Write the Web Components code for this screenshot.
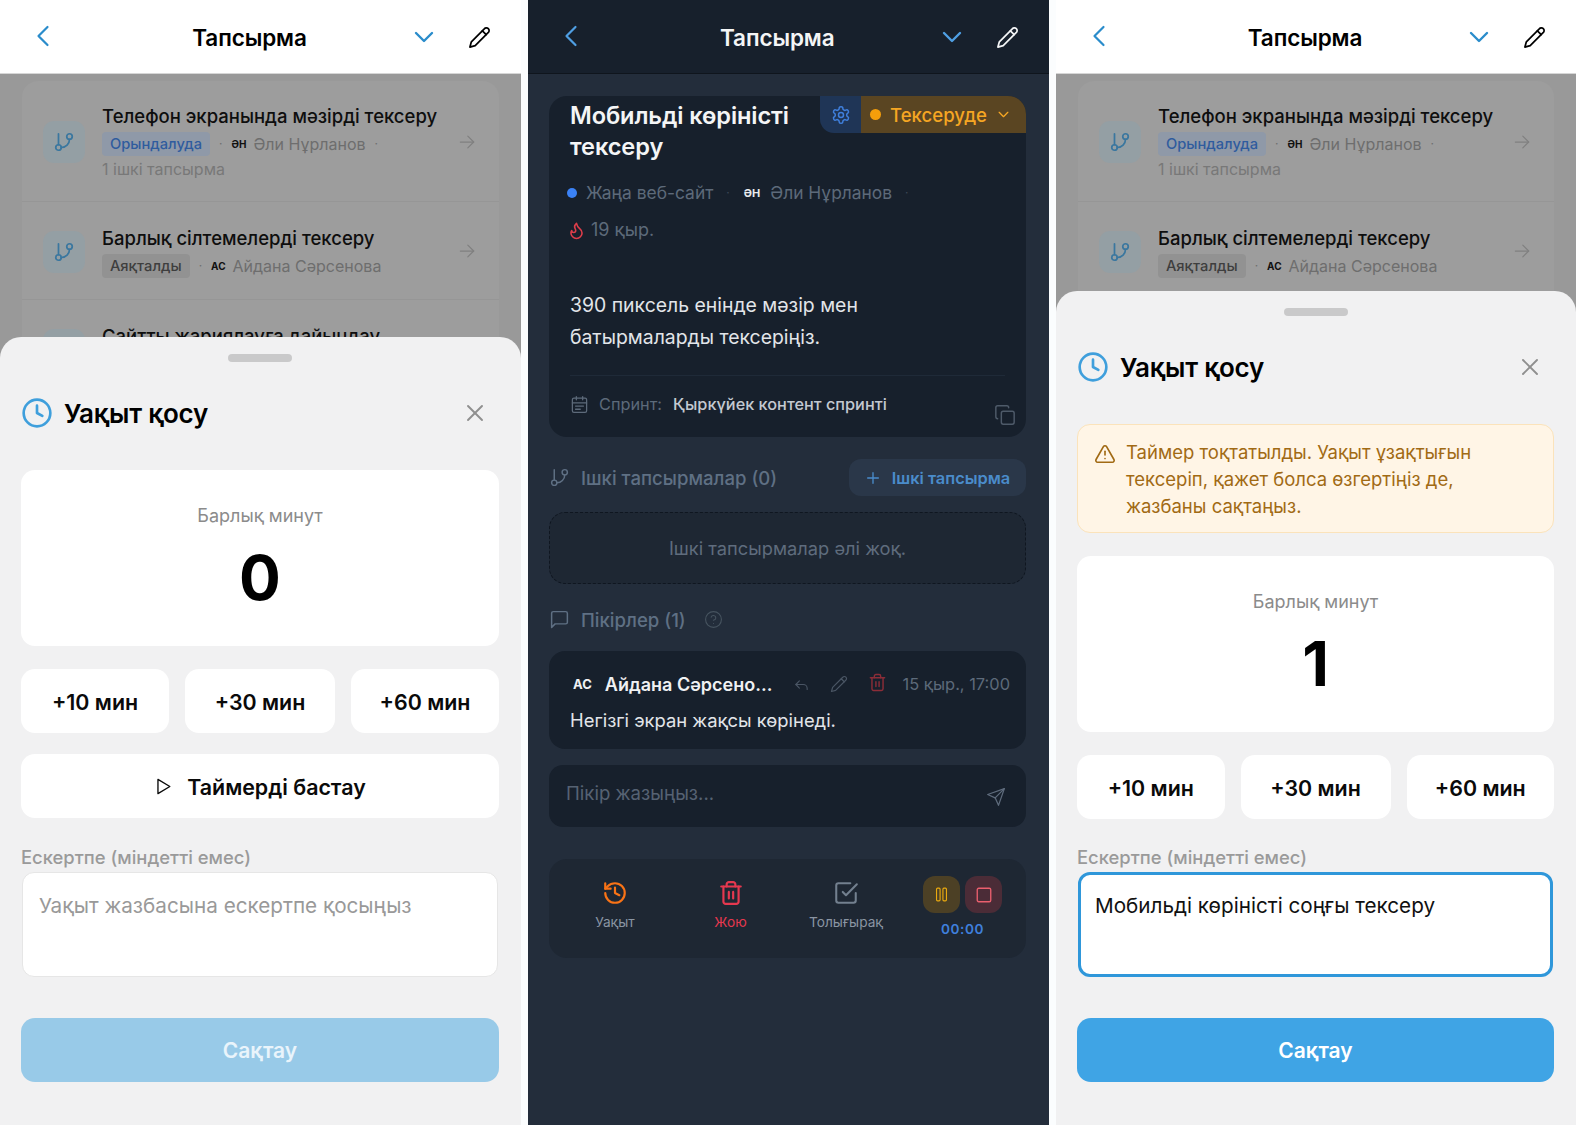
<!DOCTYPE html>
<html lang="kk">
<head>
<meta charset="utf-8">
<title>Тапсырма</title>
<style>
  html, body { margin: 0; height: 1125px; overflow: hidden; background: #fbfdfe; }
  body { font-family: Inter, "Noto Sans", sans-serif; }
  .screens { display: grid; grid-template-columns: 521px 520px 520px; column-gap: 7.5px; height: 1125px; }
  detail-screen { margin-left: -.5px; }
</style>
</head>
<body>
<div class="screens">
  <task-screen>
    <task-list with-third></task-list>
    <time-sheet total="0" with-timer note="" slot="sheet"></time-sheet>
  </task-screen>
  <detail-screen></detail-screen>
  <task-screen>
    <task-list></task-list>
    <time-sheet total="1" note="Мобильді көріністі соңғы тексеру" slot="sheet">
      <span slot="alert">Таймер тоқтатылды. Уақыт ұзақтығын тексеріп, қажет болса өзгертіңіз де, жазбаны сақтаңыз.</span>
    </time-sheet>
  </task-screen>
</div>

<script>
// lucide style paths, all on a 24 box
var ICONS = {
  back: '<path d="M15.5 3l-9 9 9 9"/>',
  down: '<path d="M4 8l8 8 8-8"/>',
  pencil: '<path d="M17 3a2.85 2.83 0 1 1 4 4L7.5 20.5 2 22l1.5-5.5Z"/><path d="M15 5l4 4"/>',
  branch: '<path d="M6 3v12"/><circle cx="18" cy="6" r="3"/><circle cx="6" cy="18" r="3"/><path d="M18 9a9 9 0 0 1-9 9"/>',
  arrow: '<path d="M4 12h16"/><path d="M13 5l7 7-7 7"/>',
  clock: '<circle cx="12" cy="12" r="10"/><path d="M12 6.5V12l4 2.2"/>',
  close: '<path d="M5 5l14 14"/><path d="M19 5L5 19"/>',
  gear: '<path d="M12.22 2h-.44a2 2 0 0 0-2 2v.18a2 2 0 0 1-1 1.73l-.43.25a2 2 0 0 1-2 0l-.15-.08a2 2 0 0 0-2.73.73l-.22.38a2 2 0 0 0 .73 2.73l.15.1a2 2 0 0 1 1 1.72v.51a2 2 0 0 1-1 1.74l-.15.09a2 2 0 0 0-.73 2.73l.22.38a2 2 0 0 0 2.73.73l.15-.08a2 2 0 0 1 2 0l.43.25a2 2 0 0 1 1 1.73V20a2 2 0 0 0 2 2h.44a2 2 0 0 0 2-2v-.18a2 2 0 0 1 1-1.73l.43-.25a2 2 0 0 1 2 0l.15.08a2 2 0 0 0 2.73-.73l.22-.39a2 2 0 0 0-.73-2.73l-.15-.08a2 2 0 0 1-1-1.74v-.5a2 2 0 0 1 1-1.74l.15-.09a2 2 0 0 0 .73-2.73l-.22-.38a2 2 0 0 0-2.73-.73l-.15.08a2 2 0 0 1-2 0l-.43-.25a2 2 0 0 1-1-1.73V4a2 2 0 0 0-2-2z"/><circle cx="12" cy="12" r="3"/>',
  flame: '<path d="M8.5 14.5A2.5 2.5 0 0 0 11 12c0-1.38-.5-2-1-3-1.072-2.143-.224-4.054 2-6 .5 2.5 2 4.9 4 6.5 2 1.6 3 3.5 3 5.5a7 7 0 1 1-14 0c0-1.153.433-2.294 1-3a2.5 2.5 0 0 0 2.5 2.5z"/>',
  calendar: '<rect x="3" y="4" width="18" height="18" rx="2"/><path d="M8 2v4M16 2v4M3 10h18M7 14h10M7 18h6"/>',
  copy: '<rect x="8" y="8" width="14" height="14" rx="2"/><path d="M4 16a2 2 0 0 1-2-2V4a2 2 0 0 1 2-2h10a2 2 0 0 1 2 2"/>',
  plus: '<path d="M12 4v16M4 12h16"/>',
  comment: '<path d="M21 15a2 2 0 0 1-2 2H7l-4 4V5a2 2 0 0 1 2-2h14a2 2 0 0 1 2 2z"/>',
  help: '<circle cx="12" cy="12" r="10"/><path d="M9.09 9a3 3 0 0 1 5.83 1c0 2-3 3-3 3"/><path d="M12 17h.01"/>',
  reply: '<path d="M9 17l-5-5 5-5"/><path d="M20 19v-1.5a5.5 5.5 0 0 0-5.5-5.5H4"/>',
  trash: '<path d="M3 6h18"/><path d="M19 6v14c0 1-1 2-2 2H7c-1 0-2-1-2-2V6"/><path d="M8 6V4c0-1 1-2 2-2h4c1 0 2 1 2 2v2"/><path d="M10 11v6M14 11v6"/>',
  send: '<path d="M22 2L11 13"/><path d="M22 2l-7 20-4-9-9-4z"/>',
  history: '<path d="M3 12a9 9 0 1 0 9-9 9.75 9.75 0 0 0-6.74 2.74L3 8"/><path d="M3 3v5h5"/><path d="M12 7v5l4 2"/>',
  check: '<path d="M9 11l3 3L22 4"/><path d="M21 12v7a2 2 0 0 1-2 2H5a2 2 0 0 1-2-2V5a2 2 0 0 1 2-2h11"/>',
  pause: '<rect x="5" y="3" width="5" height="18" rx="1.5"/><rect x="14" y="3" width="5" height="18" rx="1.5"/>',
  stop: '<rect x="3" y="3" width="18" height="18" rx="2"/>',
  play: '<path d="M5 3l15 9-15 9z"/>',
  warn: '<path d="M21.73 18l-8-14a2 2 0 0 0-3.48 0l-8 14A2 2 0 0 0 4 21h16a2 2 0 0 0 1.73-3"/><path d="M12 9v4"/><path d="M12 17h.01"/>'
};

class UiIcon extends HTMLElement {
  connectedCallback() {
    var size = this.getAttribute('size') || 24;
    var sw = this.getAttribute('stroke') || 2;
    var root = this.attachShadow({mode: 'open'});
    root.innerHTML = '<style>:host{display:inline-flex;flex:none;line-height:0}</style>' +
      '<svg width="' + size + '" height="' + size + '" viewBox="0 0 24 24" fill="none" stroke="currentColor" stroke-width="' + sw + '" stroke-linecap="round" stroke-linejoin="round">' +
      ICONS[this.getAttribute('name')] + '</svg>';
  }
}
customElements.define('ui-icon', UiIcon);

class TopBar extends HTMLElement {
  connectedCallback() {
    var root = this.attachShadow({mode: 'open'});
    root.innerHTML = `<style>
      :host{display:grid;grid-template-columns:1fr auto 1fr;align-items:center;box-sizing:border-box;height:74px;padding:2px 30px 0 32px;
        background:var(--bar-bg,#fff);color:var(--bar-fg,#000);border-bottom:1px solid var(--bar-line,#d6d6d6);position:relative;z-index:1}
      h1{margin:0 24px 0 0;font-size:22.5px;font-weight:600;letter-spacing:-.1px}
      .l{color:var(--bar-accent,#2a8ccb)}
      .r{display:flex;justify-content:flex-end;align-items:center;gap:32px}
      .d{color:var(--bar-accent,#2a8ccb);padding-top:3px}
    </style>
    <div class="l"><ui-icon name="back" size="24" stroke="2.2"></ui-icon></div>
    <h1>Тапсырма</h1>
    <div class="r"><span class="d"><ui-icon name="down" size="24" stroke="2.4"></ui-icon></span><ui-icon name="pencil" size="23" stroke="1.8"></ui-icon></div>`;
  }
}
customElements.define('top-bar', TopBar);

class TaskRow extends HTMLElement {
  connectedCallback() {
    var a = function (n) { return this.getAttribute(n) || ''; }.bind(this);
    var meta = a('status')
      ? `<div class="m"><span class="b">${a('status')}</span><span class="dot">·</span><span class="av">${a('av')}</span>${a('who')}${a('extra') ? '<span class="dot">·</span>' : ''}</div>`
      : '<div class="m"></div>';
    var root = this.attachShadow({mode: 'open'});
    root.innerHTML = `<style>
      :host{display:grid;grid-template-columns:43px 1fr 20px;column-gap:16px;align-items:center;box-sizing:border-box;
        padding:2px 22px 0 21px;height:var(--h,98px);border-bottom:1px solid #969696}
      .ico{width:42px;height:42px;border-radius:11px;background:#949fa4;color:#3a779f;display:flex;align-items:center;justify-content:center}
      .body{padding-top:1px}
      .t{font-size:18.5px;font-weight:500;color:#0e0e0e;line-height:24px;white-space:nowrap}
      .m{display:flex;align-items:center;height:24px;font-size:16px;color:#6e6e6e;margin-top:4px;line-height:24px;white-space:nowrap}
      .b{font-size:14.7px;font-weight:500;padding:0 8px;border-radius:4px;background:var(--bb,#929292);color:var(--bc,#3e3e3e);line-height:24px}
      .dot{margin:0 9px 0 9px;font-size:12px}
      .av{font-size:10px;font-weight:700;color:#111;margin-right:7px}
      .x{font-size:16px;color:#787878;line-height:24px;margin-top:1px}
      .arr{color:#808080;margin-top:3px}
    </style>
    <div class="ico"><ui-icon name="branch" size="22" stroke="1.9"></ui-icon></div>
    <div class="body"><div class="t">${a('title')}</div>
      ${meta}
      ${a('extra') ? '<div class="x">' + a('extra') + '</div>' : ''}</div>
    <div class="arr"><ui-icon name="arrow" size="20" stroke="1.5"></ui-icon></div>`;
  }
}
customElements.define('task-row', TaskRow);

class TaskList extends HTMLElement {
  connectedCallback() {
    var root = this.attachShadow({mode: 'open'});
    root.innerHTML = `<style>
      :host{display:block;margin:7px 22.5px 0 22px;background:#9d9d9d;border-radius:16px 16px 0 0;height:400px;overflow:hidden}
    </style>
    <task-row style="--h:121px;--bb:#8f99a8;--bc:#2f5c9e" title="Телефон экранында мәзірді тексеру" status="Орындалуда" av="ӘН" who="Әли Нұрланов" extra="1 ішкі тапсырма"></task-row>
    <task-row title="Барлық сілтемелерді тексеру" status="Аяқталды" av="АС" who="Айдана Сәрсенова"></task-row>
    ${this.hasAttribute('with-third') ? '<task-row title="Сайтты жариялауға дайындау"></task-row>' : ''}`;
  }
}
customElements.define('task-list', TaskList);

class TaskScreen extends HTMLElement {
  connectedCallback() {
    var root = this.attachShadow({mode: 'open'});
    root.innerHTML = `<style>
      :host{display:block;position:relative;height:1125px;overflow:hidden;background:#999}
    </style>
    <top-bar></top-bar>
    <slot></slot>
    <slot name="sheet"></slot>`;
  }
}
customElements.define('task-screen', TaskScreen);

class QuickButton extends HTMLElement {
  connectedCallback() {
    var root = this.attachShadow({mode: 'open'});
    root.innerHTML = `<style>
      :host{display:flex;align-items:center;justify-content:center;gap:14px;box-sizing:border-box;height:64px;padding-top:1px;background:#fff;border-radius:14px;
        font-size:21.4px;font-weight:600;color:#0a0a0a}
    </style><slot></slot>`;
  }
}
customElements.define('quick-button', QuickButton);

class TimeSheet extends HTMLElement {
  connectedCallback() {
    var total = this.getAttribute('total');
    var note = this.getAttribute('note');
    var hasAlert = !!this.querySelector('[slot=alert]');
    var root = this.attachShadow({mode: 'open'});
    root.innerHTML = `<style>
      :host{position:absolute;left:0;right:0;bottom:0;background:#f1f1f2;border-radius:21px 21px 0 0;
        padding:17px 22px 43px 21px;display:flex;flex-direction:column;color:#000}
      .handle{width:64px;height:8px;border-radius:4px;background:#c9c9ca;align-self:center}
      .head{display:flex;align-items:center;gap:11px;margin:36px 0 0 0;height:30px;padding-right:12px}
      .head b{font-size:26px;font-weight:600;flex:1;letter-spacing:-.2px}
      .clock{color:#3f9fdc;margin-top:3px}
      .close{color:#8f8f8f;margin-top:4px}
      .alert{display:flex;gap:10px;box-sizing:border-box;height:109px;margin:42px 0 0;padding:14px 40px 13px 16px;background:#fff5e6;border:1px solid #fbe3bb;border-radius:13px;
        color:#a16a14;font-size:18.5px;line-height:27px}
      .alert ui-icon{margin-top:4px}
      .total{background:#fff;border-radius:14px;height:176px;margin-top:${hasAlert ? 23 : 42}px;display:flex;flex-direction:column;align-items:center}
      .total span{font-size:18px;color:#8b8b8b;margin-top:35px;line-height:22px}
      .total b{font-size:62px;font-weight:700;line-height:70px;margin-top:16px}
      .quick{display:grid;grid-template-columns:1fr 150px 1fr;column-gap:16px;margin-top:23px}
      .go{margin-top:21px}
      label{font-size:18.4px;font-weight:500;color:#9a9a9a;margin-top:${hasAlert ? 27 : 28}px;line-height:22px}
      .area{box-sizing:border-box;height:105px;margin:4px 1px 0;background:#fff;border:1px solid #e6e6e6;border-radius:12px;padding:20px 16px 0;font-size:20.7px;line-height:26px;color:#999}
      .area.on{border:3px solid #2f97da;color:#111;padding:18px 14px 0}
      .save{display:flex;align-items:center;justify-content:center;box-sizing:border-box;padding-top:1px;height:64px;margin-top:41px;border-radius:14px;color:#fff;font-size:21px;font-weight:600;background:#3fa4e5}
      .save.off{background:#98cae8;color:#e9f4fb}
    </style>
    <div class="handle"></div>
    <div class="head"><span class="clock"><ui-icon name="clock" size="32" stroke="2"></ui-icon></span><b>Уақыт қосу</b><span class="close"><ui-icon name="close" size="24" stroke="1.9"></ui-icon></span></div>
    ${hasAlert ? '<div class="alert"><ui-icon name="warn" size="22" stroke="1.8"></ui-icon><div><slot name="alert"></slot></div></div>' : ''}
    <div class="total"><span>Барлық минут</span><b>${total}</b></div>
    <div class="quick"><quick-button>+10 мин</quick-button><quick-button>+30 мин</quick-button><quick-button>+60 мин</quick-button></div>
    ${this.hasAttribute('with-timer') ? '<quick-button class="go"><ui-icon name="play" size="19" stroke="1.7"></ui-icon>Таймерді бастау</quick-button>' : ''}
    <label>Ескертпе (міндетті емес)</label>
    <div class="area ${note ? 'on' : ''}">${note || 'Уақыт жазбасына ескертпе қосыңыз'}</div>
    <div class="save ${note ? '' : 'off'}">Сақтау</div>`;
  }
}
customElements.define('time-sheet', TimeSheet);

class TaskCard extends HTMLElement {
  connectedCallback() {
    var root = this.attachShadow({mode: 'open'});
    root.innerHTML = `<style>
      :host{display:block;position:relative;background:#17202c;border-radius:18px;overflow:hidden;height:341px;box-sizing:border-box;padding:4px 21px 0;color:#e8eaed}
      h2{margin:0;font-size:23.6px;line-height:31px;font-weight:600;color:#f4f5f6;width:240px;letter-spacing:-.1px}
      .pill{position:absolute;top:0;right:0;display:flex;height:37px;font-size:18.6px;font-weight:500;color:#f5a623;border-bottom-left-radius:14px;overflow:hidden}
      .g{width:41px;background:#1f3556;color:#3f7fdc;display:flex;align-items:center;justify-content:center}
      .s{width:165px;background:#5a4522;display:flex;align-items:center;gap:9px;padding-left:9px;box-sizing:border-box}
      .s i{width:11px;height:11px;border-radius:50%;background:#f59e0b}
      .s span{flex:1}
      .s ui-icon{margin-right:16px}
      .meta{display:flex;align-items:center;font-size:17.4px;color:#5d6a7a;line-height:24px;margin:19px 0 0 -3px}
      .dot{width:10px;height:10px;border-radius:50%;background:#3b82f6;margin-right:9px}
      .sep{margin:0 14px 0 13px;font-size:12px;color:#3d4857}
      .av{font-size:11px;font-weight:700;color:#e8eaed;margin-right:10px}
      .due{display:flex;align-items:center;gap:5px;font-size:18px;color:#5d6a7a;line-height:24px;margin:13px 0 0 -3px}
      .due ui-icon{color:#dc3d4a}
      p{margin:47px 0 0;font-size:19.4px;line-height:32px;font-weight:400;color:#e2e5e9}
      hr{border:0;border-top:1px solid #1f2a38;margin:22px 0 0}
      .sprint{display:flex;align-items:center;font-size:16.3px;line-height:20px;margin-top:18px;color:#5d6a7a}
      .sprint ui-icon{margin-right:10px}
      .sprint b{font-weight:500;color:#c3c9d1;margin-left:11px}
      .copy{position:absolute;right:10px;bottom:7px;color:#4e5a69}
    </style>
    <h2>Мобильді көріністі тексеру</h2>
    <div class="pill"><div class="g"><ui-icon name="gear" size="20" stroke="1.8"></ui-icon></div><div class="s"><i></i><span>Тексеруде</span><ui-icon name="down" size="13" stroke="2.4"></ui-icon></div></div>
    <div class="meta"><span class="dot"></span>Жаңа веб-сайт<span class="sep">·</span><span class="av">ӘН</span>Әли Нұрланов<span class="sep">·</span></div>
    <div class="due"><ui-icon name="flame" size="19" stroke="2"></ui-icon>19 қыр.</div>
    <p>390 пиксель енінде мәзір мен<br>батырмаларды тексеріңіз.</p>
    <hr>
    <div class="sprint"><ui-icon name="calendar" size="19" stroke="1.6"></ui-icon>Спринт:<b>Қыркүйек контент спринті</b></div>
    <span class="copy"><ui-icon name="copy" size="22" stroke="1.6"></ui-icon></span>`;
  }
}
customElements.define('task-card', TaskCard);

class CommentCard extends HTMLElement {
  connectedCallback() {
    var root = this.attachShadow({mode: 'open'});
    root.innerHTML = `<style>
      :host{display:block;background:#17202c;border-radius:16px;height:98px;box-sizing:border-box;padding:21px 16px 0 21px;color:#e8eaed}
      .top{display:flex;align-items:center;height:24px}
      .av{font-size:13px;font-weight:700;margin:0 13px 0 3px;color:#f0f1f3}
      b{font-size:18px;font-weight:600;color:#f0f1f3;white-space:nowrap}
      .a{display:flex;align-items:center;color:#4a5564;margin-left:21px;gap:20px}
      .del{color:#8c2d38}
      time{margin-left:auto;font-size:16.4px;color:#5d6a7a}
      .text{font-size:18.4px;margin-top:13px;line-height:22px;color:#e2e5e9}
    </style>
    <div class="top"><span class="av">АС</span><b>Айдана Сәрсено...</b>
      <span class="a"><ui-icon name="reply" size="17" stroke="1.6"></ui-icon><ui-icon name="pencil" size="18" stroke="1.6"></ui-icon><span class="del"><ui-icon name="trash" size="19" stroke="1.8"></ui-icon></span></span>
      <time>15 қыр., 17:00</time></div>
    <div class="text">Негізгі экран жақсы көрінеді.</div>`;
  }
}
customElements.define('comment-card', CommentCard);

class ActionBar extends HTMLElement {
  connectedCallback() {
    var root = this.attachShadow({mode: 'open'});
    root.innerHTML = `<style>
      :host{display:grid;grid-template-columns:132px 99px 132px 1fr;background:#1e2733;border-radius:18px;height:99px;box-sizing:border-box;padding:0 22px 0 0;align-items:start}
      .i{display:flex;flex-direction:column;align-items:center;padding-top:21px;font-size:13.7px;line-height:18px;color:#8a95a3;gap:7px}
      .i.h{color:#f97316}.i.h span{color:#8a95a3}
      .i.d{color:#e5384f}
      .i.c ui-icon{color:#73808f}
      .t{display:flex;flex-direction:column;align-items:center;padding-top:17px;margin-left:9px}
      .bs{display:flex;gap:5px}
      .b{width:37px;height:37px;border-radius:12px;display:flex;align-items:center;justify-content:center}
      .p{background:#4c4025;color:#eaa90f}.q{background:#4b2c37;color:#ea5f6e}
      .time{font-size:13.6px;font-weight:600;color:#3f7fdc;margin-top:7px;letter-spacing:.6px;line-height:18px}
    </style>
    <div class="i h"><ui-icon name="history" size="26" stroke="2"></ui-icon><span>Уақыт</span></div>
    <div class="i d"><ui-icon name="trash" size="26" stroke="2"></ui-icon><span>Жою</span></div>
    <div class="i c"><ui-icon name="check" size="26" stroke="1.9"></ui-icon><span>Толығырақ</span></div>
    <div class="t"><div class="bs"><div class="b p"><ui-icon name="pause" size="17" stroke="1.6"></ui-icon></div><div class="b q"><ui-icon name="stop" size="18" stroke="1.8"></ui-icon></div></div><div class="time">00:00</div></div>`;
  }
}
customElements.define('action-bar', ActionBar);

class DetailScreen extends HTMLElement {
  connectedCallback() {
    var root = this.attachShadow({mode: 'open'});
    root.innerHTML = `<style>
      :host{display:block;height:1125px;overflow:hidden;background:#232d3b;
        --bar-bg:#17202c;--bar-fg:#f4f5f6;--bar-line:#0f151d;--bar-accent:#4f9fe3}
      main{display:flex;flex-direction:column;padding:22px 22.5px 0 21px}
      .sec{display:flex;align-items:center;gap:11px;color:#5f7084;font-size:18.6px;font-weight:500;height:37px}
      .sec.first{margin-top:22px}
      .add{margin-left:auto;display:flex;align-items:center;gap:11px;height:37px;width:177px;box-sizing:border-box;justify-content:center;background:#2a3749;border-radius:12px;color:#4a8ccb;font-size:16.4px;font-weight:600}
      .empty{height:72px;margin-top:16px;box-sizing:border-box;border:1px dashed #0f1620;border-radius:16px;background:#1e2733;color:#5f6c7d;font-size:18.3px;display:flex;align-items:center;justify-content:center}
      .sec.c{margin-top:17px}
      .help{color:#46535f;margin-left:7px;display:inline-flex}
      comment-card{margin-top:13px}
      .input{height:62px;margin-top:16px;background:#17202c;border-radius:14px;box-sizing:border-box;padding:0 20px 6px 17px;display:flex;align-items:center;justify-content:space-between;font-size:18.6px;color:#566273}
      .input ui-icon{color:#5f6c7d;margin-top:8px}
      action-bar{margin-top:32px}
    </style>
    <top-bar></top-bar>
    <main>
      <task-card></task-card>
      <div class="sec first"><ui-icon name="branch" size="21" stroke="1.7"></ui-icon>Ішкі тапсырмалар (0)
        <span class="add"><ui-icon name="plus" size="16" stroke="2"></ui-icon>Ішкі тапсырма</span></div>
      <div class="empty">Ішкі тапсырмалар әлі жоқ.</div>
      <div class="sec c"><ui-icon name="comment" size="21" stroke="1.7"></ui-icon>Пікірлер (1)<span class="help"><ui-icon name="help" size="19" stroke="1.4"></ui-icon></span></div>
      <comment-card></comment-card>
      <div class="input">Пікір жазыңыз...<ui-icon name="send" size="20" stroke="1.5"></ui-icon></div>
      <action-bar></action-bar>
    </main>`;
  }
}
customElements.define('detail-screen', DetailScreen);
</script>
</body>
</html>
